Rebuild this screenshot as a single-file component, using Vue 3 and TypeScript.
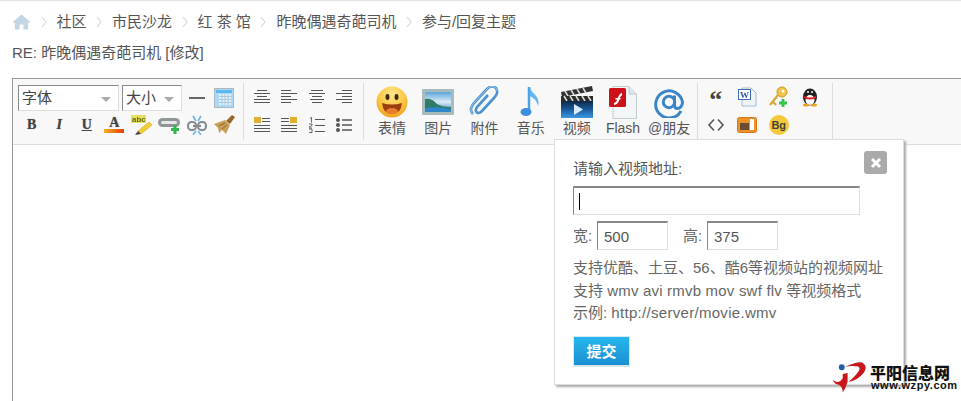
<script setup lang="ts">
const crumbs: string[] = ['社区', '市民沙龙', '红 茶 馆', '昨晚偶遇奇葩司机', '参与/回复主题']
const big: string[] = ['表情', '图片', '附件', '音乐', '视频', 'Flash', '@朋友']
</script>

<template>
  <div class="page">
    <nav class="crumbs">
      <svg class="home" width="19" height="16" viewBox="0 0 20 16"><path d="M10 0 L20 8.500 L17 8.500 L17 16 L12 16 L12 10.500 L8 10.500 L8 16 L3 16 L3 8.500 L0 8.500 Z" fill="#c4d6e4"/></svg>
      <template v-for="c in crumbs" :key="c">
        <svg class="chev" width="6" height="12" viewBox="0 0 6 12"><path d="M1 1 L5 6 L1 11" fill="none" stroke="#d8d8d8" stroke-width="1.200"/></svg>
        <span class="crumb">{{ c }}</span>
      </template>
    </nav>
    <div class="title">RE: 昨晚偶遇奇葩司机 [修改]</div>

    <div class="editor">
      <div class="toolbar">
        <div class="group g-left">
          <div class="row">
            <div class="select s1">字体<i class="caret"></i></div>
            <div class="select s2">大小<i class="caret"></i></div>
            <span class="cell first"><svg class="soft" width="16" height="16" viewBox="0 0 16 16"><rect x="0" y="7" width="16" height="2" fill="#666"/></svg></span>
            <span class="cell"><svg class="soft" width="20" height="20" viewBox="0 0 20 20"><rect x=".5" y=".5" width="19" height="19" fill="#a8d8fa" stroke="#b0b8bc"/><rect x="2" y="2" width="16" height="3" fill="#5cb8f4"/><rect x="5" y="6" width="12" height="11" fill="#e4f0f8"/><path d="M5 8.500h12M5 11.500h12M5 14.500h12M8 6v11M11 6v11M14 6v11" stroke="#a8c8dc" stroke-width="1"/></svg></span>
          </div>
          <div class="row icons">
            <span class="cell"><b class="fmt bold">B</b></span>
            <span class="cell"><i class="fmt ital">I</i></span>
            <span class="cell"><u class="fmt und">U</u></span>
            <span class="cell col"><b class="fmt a">A</b><em class="grad"></em></span>
            <span class="cell"><svg class="soft" width="22" height="20" viewBox="0 0 22 20"><rect x="0" y="0" width="15" height="8" fill="#e8e060"/><text x="1" y="7" font-size="8" font-weight="700" font-family="Liberation Sans" fill="#6a6a10">abc</text><path d="M7 16 L18 7 L21 10 L10 19 Z" fill="#f2ce2e" stroke="#c09a10" stroke-width=".5"/><path d="M4 20 L7 16 L10 19 Z" fill="#444"/></svg></span>
            <span class="cell"><svg class="soft" width="24" height="20" viewBox="0 0 24 20"><rect x="1" y="3" width="22" height="9" rx="4.500" fill="#909698"/><rect x="4" y="6" width="16" height="3" rx="1.500" fill="#e6e8e8"/><rect x="14" y="13" width="8" height="3" fill="#2eb84c"/><rect x="16.500" y="10" width="3" height="9" fill="#2eb84c"/></svg></span>
            <span class="cell"><svg class="soft" width="20" height="20" viewBox="0 0 20 20"><rect x="1" y="7" width="8" height="8" rx="3.500" fill="none" stroke="#848a8e" stroke-width="2"/><rect x="11" y="7" width="8" height="8" rx="3.500" fill="none" stroke="#848a8e" stroke-width="2"/><path d="M6 11h3M11 11h3" stroke="#848a8e" stroke-width="2"/><path d="M6 1l3 5M14 1l-3 5M6 20l3-4M14 20l-3-4" stroke="#6fb4ea" stroke-width="1.600"/></svg></span>
            <span class="cell"><svg class="soft" width="22" height="20" viewBox="0 0 22 20"><path d="M13 6 L19 0 L22 2 L17 9 Z" fill="#9a6520"/><path d="M1 9 L12 5 L17 10 L13 19 L9 15 L6 18 L5 13 Z" fill="#c8a05a"/><path d="M6 11 L12 8 M9 14 L14 10" stroke="#8a6420"/></svg></span>
          </div>
        </div>

        <div class="group g-align">
          <div class="row">
            <span v-for="n in 4" :key="n" class="cell">
              <svg class="soft" width="16" height="16" viewBox="0 0 16 16"><path v-if="n===1" d="M3 1.500h10M0 4.500h16M3 7.500h10M0 10.500h16M0 13.500h16" stroke="#555" fill="none"/><path v-if="n===2" d="M0 1.500h10M0 4.500h16M0 7.500h10M0 10.500h16M0 13.500h10" stroke="#555" fill="none"/><path v-if="n===3" d="M2 1.500h12M0 4.500h16M3 7.500h10M1 10.500h14M3 13.500h10" stroke="#555" fill="none"/><path v-if="n===4" d="M6 1.500h10M0 4.500h16M6 7.500h10M0 10.500h16M6 13.500h10" stroke="#555" fill="none"/></svg>
            </span>
          </div>
          <div class="row">
            <span class="cell"><svg class="soft" width="16" height="16" viewBox="0 0 16 16"><rect x="0" y="0" width="7" height="6" fill="#e0b030"/><path d="M8 1.500h8M8 4.500h8M0 8.500h16M0 11.500h16M0 14.500h16" stroke="#555"/></svg></span>
            <span class="cell"><svg class="soft" width="16" height="16" viewBox="0 0 16 16"><rect x="9" y="0" width="7" height="6" fill="#e0b030"/><path d="M0 1.500h8M0 4.500h8M0 8.500h16M0 11.500h16M0 14.500h16" stroke="#555"/></svg></span>
            <span class="cell"><svg class="soft" width="16" height="16" viewBox="0 0 16 16"><path d="M6 2.500h10M6 8.500h10M6 14.500h10" stroke="#555"/><path d="M1 1l1.500-.5v5M0 7h3v1.500l-3 1.500v1h3M0 12h3v3.500h-3" fill="none" stroke="#555" stroke-width=".9"/></svg></span>
            <span class="cell"><svg class="soft" width="16" height="16" viewBox="0 0 16 16"><circle cx="2" cy="3" r="2" fill="#555"/><circle cx="2" cy="8" r="2" fill="#555"/><circle cx="2" cy="13" r="2" fill="#555"/><path d="M6 3h10M6 8h10M6 13h10" stroke="#555" stroke-width="1.400"/></svg></span>
          </div>
        </div>

        <div class="group g-big">
          <div v-for="(b, i) in big" :key="b" class="bigbtn">
            <div class="ico">
              <svg v-if="i===0" class="soft" width="32" height="32" viewBox="0 0 32 32"><defs><radialGradient id="sm" cx=".5" cy=".25" r=".8"><stop offset="0" stop-color="#ffe88a"/><stop offset=".6" stop-color="#fbc33c"/><stop offset="1" stop-color="#ee9a1e"/></radialGradient></defs><circle cx="16" cy="16" r="15.500" fill="url(#sm)"/><ellipse cx="11.500" cy="11" rx="2" ry="3" fill="#3a2a10"/><ellipse cx="20.500" cy="11" rx="2" ry="3" fill="#3a2a10"/><path d="M6 17 Q16 20 26 17 Q25 28 16 28 Q7 28 6 17Z" fill="#9a3f10"/><ellipse cx="16" cy="25" rx="6" ry="3" fill="#ea7c2c"/></svg>
              <svg v-else-if="i===1" class="soft" width="32" height="26" viewBox="0 0 32 26"><defs><linearGradient id="skyg" x1="0" y1="0" x2="0" y2="1"><stop offset="0" stop-color="#5aa4dc"/><stop offset=".5" stop-color="#dcecf4"/><stop offset="1" stop-color="#2f80c0"/></linearGradient></defs><rect x="0" y="0" width="32" height="26" rx="1" fill="#a9bbbd"/><rect x="3" y="3" width="26" height="20" fill="url(#skyg)"/><path d="M3 10 Q10 9 15 15 Q20 18 29 18 V23 H3Z" fill="#2f7d66"/><path d="M3 19 Q16 17 29 20 V23 H3Z" fill="#2f86c8"/></svg>
              <svg v-else-if="i===2" class="soft" width="30" height="32" viewBox="0 0 30 32"><path d="M4 29 C0 25 2 21 6 17 L18 4 C22 0 28 1 28 6 C29 9 26 12 24 14 L13 26 C9 30 5 27 8 22 L19 10" fill="none" stroke="#4a92d0" stroke-width="2.600" transform="translate(0 -1)"/><path d="M4 29 C0 25 2 21 6 17 L18 4 C22 0 28 1 28 6" fill="none" stroke="#9cc8ea" stroke-width="1" transform="translate(0 -1)"/></svg>
              <svg v-else-if="i===3" class="soft" width="22" height="32" viewBox="0 0 22 32"><path d="M9 1 V25" stroke="#4aa4ec" stroke-width="2.500"/><path d="M10 1 C11 8 21 10 18 20 C17 14 13 12 10 10Z" fill="#62b6f4"/><ellipse cx="6" cy="26" rx="5.500" ry="4" fill="#3a8fe0"/></svg>
              <svg v-else-if="i===4" class="soft" width="34" height="33" viewBox="0 0 34 33"><defs><linearGradient id="vid" x1="0" y1="0" x2="0" y2="1"><stop offset="0" stop-color="#0e2844"/><stop offset=".5" stop-color="#1a5a9c"/><stop offset="1" stop-color="#3c9ae4"/></linearGradient></defs><path d="M1 6 L32 0 L33 5 L2 11Z" fill="#333"/><path d="M5 5l3 5M11 4l3 5M17 3l3 5M23 2l3 5" stroke="#ddd" stroke-width="1.500"/><rect x="1" y="10" width="32" height="5" fill="#2c2c2c"/><path d="M4 10l3 5M10 10l3 5M16 10l3 5M22 10l3 5M28 10l3 5" stroke="#ddd" stroke-width="1.500"/><rect x="1" y="15" width="32" height="17" fill="url(#vid)"/><path d="M14 18 L23 23.500 L14 29Z" fill="#d8ecff"/></svg>
              <svg v-else-if="i===5" class="soft" width="28" height="33" viewBox="0 0 28 33"><path d="M4 .5 H20 L27.500 8 V32.500 H4Z" fill="#f2f6f8" stroke="#c0ccd0"/><path d="M20 .5 V8 H27.500" fill="#dde6ea" stroke="#c0ccd0"/><rect x="0" y="2" width="17" height="19" rx="1.500" fill="#cc1218"/><path d="M5 17 C9 17 8 8 13 7 V9.500 C10 10 11 19 5 19Z M6.500 12 H11.500 V13.500 H6.500Z" fill="#fff"/></svg>
              <svg v-else class="soft" width="30" height="32" viewBox="0 0 30 32"><path d="M27 25 A13.500 13.500 0 1 1 28.500 16 C28.500 20 26 22.500 23.500 22.500 C21.500 22.500 20.500 21 20.500 19 V9.500" fill="none" stroke="#3a86c8" stroke-width="3"/><circle cx="15" cy="16" r="5.700" fill="none" stroke="#3a86c8" stroke-width="3"/></svg>
            </div>
            <span>{{ b }}</span>
          </div>
        </div>

        <div class="group g-small">
          <div class="row">
            <span class="cell"><b class="quote">“</b></span>
            <span class="cell"><svg class="soft" width="20" height="20" viewBox="0 0 20 20"><path d="M5 1 H14 L19 6 V19 H5Z" fill="#eef4f8" stroke="#a8bccc"/><rect x="1" y="2" width="13" height="11" fill="#3f6bb8"/><rect x="2" y="3" width="11" height="9" fill="#fff"/><text x="3" y="11" font-size="9" font-weight="700" font-family="Liberation Serif" fill="#2a55a8">W</text></svg></span>
            <span class="cell"><svg class="soft" width="22" height="22" viewBox="0 0 22 22"><circle cx="14" cy="6" r="5" fill="#f2c44a" stroke="#c99a20"/><circle cx="15" cy="5" r="1.500" fill="#fff"/><path d="M10 9 L2 19 M5 16 L8 19" stroke="#d8a838" stroke-width="2.200"/><path d="M15 13v8M11 17h8" stroke="#3cc050" stroke-width="3"/></svg></span>
            <span class="cell"><svg class="soft" width="18" height="20" viewBox="0 0 18 20"><ellipse cx="9" cy="10" rx="7" ry="8.500" fill="#222"/><ellipse cx="9" cy="13" rx="4.500" ry="5" fill="#fff"/><circle cx="7" cy="5" r="1" fill="#fff"/><circle cx="11" cy="5" r="1" fill="#fff"/><path d="M3 9 Q9 12 15 9 L15 11 Q9 14 3 11Z" fill="#e02020"/><ellipse cx="5" cy="18" rx="3" ry="1.500" fill="#f0a020"/><ellipse cx="13" cy="18" rx="3" ry="1.500" fill="#f0a020"/></svg></span>
          </div>
          <div class="row">
            <span class="cell"><svg class="soft" width="16" height="14" viewBox="0 0 16 14"><path d="M6 1.500 L1 7 L6 12.500M10 1.500 L15 7 L10 12.500" fill="none" stroke="#555" stroke-width="1.600"/></svg></span>
            <span class="cell"><svg class="soft" width="20" height="16" viewBox="0 0 20 16"><rect x=".5" y=".5" width="19" height="15" rx="2" fill="#f0922c" stroke="#d07818"/><rect x="3" y="6" width="9" height="7" fill="#6a4a30"/><rect x="13" y="2" width="4" height="11" fill="#fff"/></svg></span>
            <span class="cell"><span class="bg">Bg</span></span>
            <span class="cell"></span>
          </div>
        </div>
      </div>

      <div class="canvas">
        <div class="dialog">
          <button class="close" type="button"><svg width="12" height="12" viewBox="0 0 12 12"><path d="M2 2 L10 10 M10 2 L2 10" stroke="#fff" stroke-width="3"/></svg></button>
          <label class="lbl">请输入视频地址:</label>
          <div class="field url"><em class="cursor"></em></div>
          <div class="dims">
            <span>宽:</span><div class="field num">500</div>
            <span class="gap">高:</span><div class="field num">375</div>
          </div>
          <p class="help">支持优酷、土豆、56、酷6等视频站的视频网址<br>支持 <span class="l2">wmv avi rmvb mov swf flv</span> 等视频格式<br>示例: <span class="l3">http://server/movie.wmv</span></p>
          <button class="submit" type="button">提交</button>
        </div>
      </div>
    </div>

    <div class="logo">
      <svg width="37" height="34" viewBox="0 0 38 34"><circle cx="9" cy="7" r="3" fill="#1c5ea8"/><path d="M0 20 Q6 25 10 18 L10 14 L15 13 L15 22 Q13 29 10 33 Q10 27 6 25 Q1 24 0 20Z" fill="#c8161d"/><path d="M12 7 Q24 1 30 2 Q36 6 32 12 Q26 20 16 22 Q24 15 27 10 Q28 6 24 6 Q18 5 12 7Z" fill="#c8161d"/></svg>
      <div class="logotext"><strong>平阳信息网</strong><small>www.wzpy.com</small></div>
    </div>
  </div>
</template>

<style scoped>
.page { position: relative; width: 961px; height: 401px; overflow: hidden; background: #fff; font: 15px/20px "Liberation Sans", "Noto Sans CJK SC", sans-serif; color: #555; box-sizing: border-box; border-top: 1px solid #e4e4e4; }
.crumbs { display: flex; align-items: center; height: 16px; margin: 13px 0 0 12px; color: #555; }
.crumb { white-space: pre; }
.chev { margin: 0 10px 0 9.500px; flex: none; }
.title { margin: 13px 0 0 12px; height: 20px; color: #555; }
.editor { margin: 15px 0 0 12px; border: 1px solid #999; border-right: 0; height: 340px; }
.toolbar { display: flex; height: 65px; background: #f8f8f8; border-bottom: 1px solid #ddd; }
.group { height: 57px; margin-top: 4px; border-right: 1px solid #ddd; box-sizing: border-box; }
.row { display: flex; height: 28px; align-items: center; }
.cell { width: 27.500px; height: 26px; display: flex; align-items: center; justify-content: center; flex: none; }
.cell.first { margin-left: 1px; }
.col { flex-direction: column; }
.soft { filter: blur(.3px); }
.g-left { width: 231px; padding-left: 5px; }
.g-left .row:first-child { margin-top: 1px; height: 27px; }
.select { box-sizing: border-box; height: 26px; flex: none; background: #fff; border: 1px solid; border-color: #888 #ddd #ddd #888; display: flex; align-items: center; padding-left: 3px; color: #444; font-size: 15px; position: relative; }
.s1 { width: 101px; margin-right: 3px; }
.s2 { width: 60px; }
.caret { position: absolute; right: 7px; top: 11px; border: 5px solid transparent; border-top: 5px solid #aaa; border-bottom: 0; }
.fmt { font: 700 14px "Liberation Serif", serif; color: #444; text-shadow: 0 0 1px #888; }
.ital { font-style: italic; }
.und { font-weight: 700; text-decoration: underline; }
.a { line-height: 12px; }
.grad { width: 20px; height: 4px; background: linear-gradient(90deg, #f2b020, #e83c10); display: block; }
.g-align { width: 120px; padding-left: 4px; }
.g-big { width: 334px; padding-left: 5px; display: flex; }
.bigbtn { width: 46.200px; flex: none; height: 57px; display: flex; flex-direction: column; align-items: center; font-size: 14px; line-height: 20px; color: #555; }
.ico { height: 32px; margin-top: 3px; flex: none; display: flex; align-items: center; justify-content: center; }
.bigbtn svg { flex: none; }
.bigbtn span { white-space: nowrap; }
.g-small { width: 135px; padding-left: 2px; }
.g-small .cell { width: 31.500px; }
.quote { font: 700 26px/20px "Liberation Serif", serif; color: #444; height: 14px; }
.bg { width: 20px; height: 20px; border-radius: 50%; background: #f5c93c; font: 700 11px/20px "Liberation Sans", sans-serif; text-align: center; color: #443; }
.canvas { position: relative; }
.dialog { position: absolute; left: 541px; top: -6px; width: 350px; height: 246px; box-sizing: border-box; background: #fff; border: 1px solid #ddd; box-shadow: 2px 2px 2px #aaa; padding: 19px 0 0 18px; z-index: 2; color: #666; }
.close { position: absolute; left: 309px; top: 11px; width: 23px; height: 23px; padding: 0; border: 0; border-radius: 3px; background: #aaa; display: flex; align-items: center; justify-content: center; }
.lbl { display: block; height: 20px; color: #555; }
.field { box-sizing: border-box; background: #fff; border: 1px solid; border-color: #888 #ddd #ddd #888; border-top-width: 2px; color: #555; }
.url { width: 287px; height: 29px; margin-top: 7px; padding: 5px 0 0 5px; }
.cursor { display: block; width: 1px; height: 17px; background: #000; }
.dims { display: flex; align-items: center; margin-top: 6px; height: 29px; }
.dims span { width: 24px; flex: none; }
.dims .gap { width: 24px; margin-left: 15px; }
.num { width: 71px; height: 29px; padding: 4px 0 0 6px; }
.help { margin: 7px 0 0; line-height: 22.500px; color: #666; white-space: nowrap; }
.l2 { letter-spacing: .2px; }
.l3 { letter-spacing: .3px; }
.submit { display: block; margin-top: 11px; width: 57px; height: 31px; padding: 0; border: 1px solid #d6ebf6; border-bottom: 2px solid #d6e4ec; background: linear-gradient(#26b6ec, #1b8fd2); color: #fff; font: 700 15px "Noto Sans CJK SC", sans-serif; }
.logo { position: absolute; left: 833px; top: 359px; display: flex; z-index: 3; }
.logotext { margin: 4px 0 0 0; display: flex; flex-direction: column; color: #111; }
.logotext strong { font: 900 16px/16px "Noto Sans CJK SC", sans-serif; height: 16px; }
.logotext small { font: 700 11px/11px "Liberation Sans", sans-serif; letter-spacing: .55px; margin-left: 1px; }
</style>

<style>
html, body { margin: 0; background: #fff; }
</style>
